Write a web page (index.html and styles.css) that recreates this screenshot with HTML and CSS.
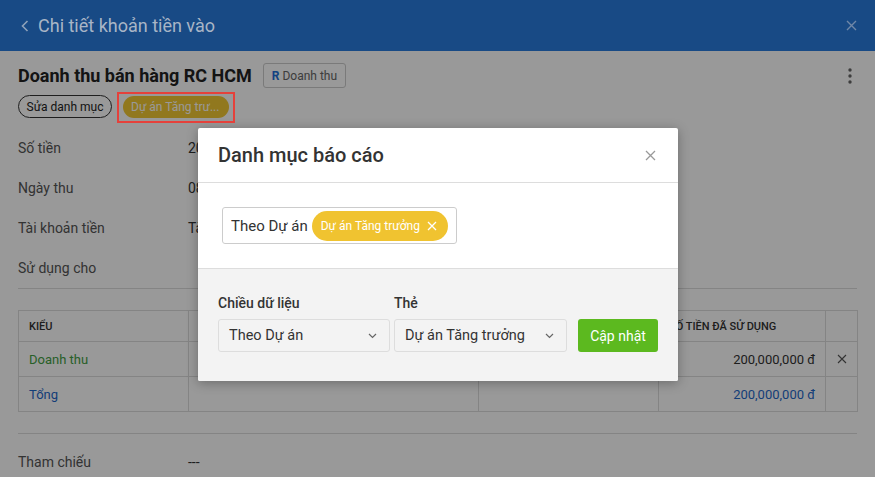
FILE: index.html
```html
<!DOCTYPE html>
<html lang="vi">
<head>
<meta charset="utf-8">
<title>Chi tiết khoản tiền vào</title>
<link rel="stylesheet" href="styles.css">
</head>
<body>
<div class="app">
  <header class="topbar">
    <svg class="topbar-back" width="8" height="12" viewBox="0 0 8 12"><path d="M6.5 1 L1.5 6 L6.5 11" fill="none" stroke="currentColor" stroke-width="1.6"/></svg>
    <span class="topbar-title">Chi tiết khoản tiền vào</span>
    <svg class="topbar-close" width="11" height="11" viewBox="0 0 11 11"><path d="M1 1 L10 10 M10 1 L1 10" stroke="currentColor" stroke-width="1.4"/></svg>
  </header>

  <main class="content">
    <div class="title-row">
      <h1 class="title">Doanh thu bán hàng RC HCM</h1>
      <span class="type-badge"><b>R</b> Doanh thu</span>
      <svg class="more" width="4" height="16" viewBox="0 0 4 16"><circle cx="2" cy="2" r="1.7"/><circle cx="2" cy="8" r="1.7"/><circle cx="2" cy="14" r="1.7"/></svg>
    </div>
    <div class="tag-row">
      <span class="pill-outline">Sửa danh mục</span>
      <span class="highlight"><span class="pill-yellow">Dự án Tăng trư...</span></span>
    </div>

    <div class="field"><span class="field-label">Số tiền</span><span class="field-value">200,000,000 đ</span></div>
    <div class="field"><span class="field-label">Ngày thu</span><span class="field-value">08/10/2019</span></div>
    <div class="field"><span class="field-label">Tài khoản tiền</span><span class="field-value">Tài khoản ngân hàng</span></div>
    <div class="field"><span class="field-label">Sử dụng cho</span><span class="field-value"></span></div>
    <div class="divider"></div>

    <table class="usage">
      <colgroup><col class="c1"><col class="c2"><col class="c3"><col class="c4"><col class="c5"></colgroup>
      <thead>
        <tr><th>Kiểu</th><th>Diễn giải</th><th>Số tiền</th><th>Số tiền đã sử dụng</th><th></th></tr>
      </thead>
      <tbody>
        <tr><td class="green">Doanh thu</td><td></td><td></td><td class="num">200,000,000 đ</td><td class="act"><svg width="10" height="10" viewBox="0 0 10 10"><path d="M1 1 L9 9 M9 1 L1 9" stroke="currentColor" stroke-width="1.1"/></svg></td></tr>
        <tr><td class="blue">Tổng</td><td></td><td></td><td class="num blue">200,000,000 đ</td><td></td></tr>
      </tbody>
    </table>
    <div class="divider second"></div>

    <div class="field"><span class="field-label">Tham chiếu</span><span class="field-value">---</span></div>
  </main>

  <div class="overlay"></div>

  <section class="modal">
    <div class="modal-head">
      <h2 class="modal-title">Danh mục báo cáo</h2>
      <svg class="modal-close" width="11" height="11" viewBox="0 0 11 11"><path d="M1 1 L10 10 M10 1 L1 10" stroke="currentColor" stroke-width="1.3"/></svg>
    </div>
    <div class="modal-body">
      <div class="tag-input">
        <span class="tag-input-text">Theo Dự án</span>
        <span class="chip">Dự án Tăng trưởng
          <svg width="10" height="10" viewBox="0 0 10 10"><path d="M1 1 L9 9 M9 1 L1 9" stroke="currentColor" stroke-width="1.3"/></svg>
        </span>
      </div>
    </div>
    <div class="modal-foot">
      <div class="form-group g1">
        <label class="form-label">Chiều dữ liệu</label>
        <div class="select"><span>Theo Dự án</span><svg width="9" height="6" viewBox="0 0 9 6"><path d="M1 1 L4.5 4.5 L8 1" fill="none" stroke="currentColor" stroke-width="1.2"/></svg></div>
      </div>
      <div class="form-group g2">
        <label class="form-label">Thẻ</label>
        <div class="select"><span>Dự án Tăng trưởng</span><svg width="9" height="6" viewBox="0 0 9 6"><path d="M1 1 L4.5 4.5 L8 1" fill="none" stroke="currentColor" stroke-width="1.2"/></svg></div>
      </div>
      <button class="btn-update">Cập nhật</button>
    </div>
  </section>
</div>
</body>
</html>
```

FILE: styles.css
```css
* { box-sizing: border-box; }
html, body { margin: 0; padding: 0; }
body {
  font-family: Roboto, "Noto Sans", "Liberation Sans", sans-serif;
  color: #333;
  background: #fff;
  width: 875px;
  height: 477px;
  overflow: hidden;
}
.app { position: relative; width: 875px; height: 477px; }

.topbar {
  height: 51px;
  background: #184a85;
  display: flex;
  align-items: center;
  padding: 0 18px 0 21px;
  color: #a8b5c6;
}
.topbar-back { margin-right: 9px; color: #8fa2ba; }
.topbar-title { font-size: 18px; flex: 1; }
.topbar-close { color: #7088a8; }

.content { padding: 12px 18px 0 18px; }

.title-row { display: flex; align-items: center; height: 25px; }
.title { margin: 0; font-size: 18px; font-weight: 700; color: #222; }
.type-badge {
  margin-left: 11px;
  height: 25px;
  padding: 0 8px 0 8px;
  border: 1px solid #ccc;
  border-radius: 3px;
  font-size: 12px;
  color: #666;
  display: inline-flex;
  align-items: center;
}
.type-badge b { color: #1e6fd9; margin-right: 3px; font-size: 12px; }
.more { margin-left: auto; margin-right: 5px; fill: #666; }

.tag-row { display: flex; align-items: center; margin-top: 7px; height: 23px; gap: 11px; }
.pill-outline {
  width: 94px;
  height: 23px;
  border: 1px solid #333;
  border-radius: 12px;
  font-size: 12px;
  display: inline-flex;
  align-items: center;
  justify-content: center;
  white-space: nowrap;
  color: #222;
}
.highlight { position: relative; display: inline-flex; }
.highlight::after {
  content: "";
  position: absolute;
  left: -6px; right: -6px; top: -4px; bottom: -5px;
  border: 2px solid #e5413b;
  z-index: 30;
}
.pill-yellow {
  height: 22px;
  width: 106px;
  border-radius: 11px;
  background: #f2c832;
  color: #fff;
  font-size: 12px;
  display: inline-flex;
  align-items: center;
  padding-left: 8px;
  white-space: nowrap;
}

.field { display: flex; align-items: center; height: 40px; font-size: 14px; }
.tag-row + .field { margin-top: 10px; }
.field-label { width: 170px; color: #555; }
.field-value { color: #333; }

.divider { height: 1px; background: #ddd; }
.divider.second { margin-top: 21px; margin-bottom: 8px; }

.usage {
  margin-top: 21px;
  width: 839px;
  border-collapse: collapse;
  table-layout: fixed;
  font-size: 13px;
}
.usage col.c1 { width: 170px; }
.usage col.c2 { width: 290px; }
.usage col.c3 { width: 180px; }
.usage col.c4 { width: 167px; }
.usage col.c5 { width: 32px; }
.usage th, .usage td { border: 1px solid #ddd; padding: 0 10px; }
.usage th {
  height: 31px;
  text-align: left;
  font-size: 11px;
  font-weight: 500;
  text-transform: uppercase;
  color: #333;
}
.usage td { height: 35px; }
.usage td.num { text-align: right; }
.usage td.act { text-align: center; padding: 0; color: #555; }
.usage td.act svg { display: block; margin: 0 auto; }
.green { color: #44a044; }
.blue { color: #1f68c9; }

.overlay {
  position: absolute;
  left: 0; right: 0; top: 51px; bottom: 0;
  background: rgba(0, 0, 0, 0.4);
  z-index: 10;
}

.modal {
  position: absolute;
  left: 198px;
  top: 128px;
  width: 480px;
  background: #fff;
  border-radius: 2px;
  box-shadow: 0 2px 12px rgba(0, 0, 0, 0.3);
  z-index: 20;
  overflow: hidden;
}
.modal-head {
  height: 55px;
  display: flex;
  align-items: center;
  padding: 0 22px 0 20px;
  border-bottom: 1px solid #ddd;
}
.modal-title { margin: 0; flex: 1; font-size: 20px; font-weight: 500; color: #333; }
.modal-close { color: #999; }

.modal-body { padding: 24px 24px 24px 24px; }
.tag-input {
  width: 235px;
  height: 37px;
  border: 1px solid #ccc;
  border-radius: 3px;
  display: flex;
  align-items: center;
  padding: 0 0 0 8px;
  gap: 4px;
}
.tag-input-text { font-size: 15px; color: #333; }
.chip {
  height: 30px;
  border-radius: 15px;
  background: #f0c330;
  color: #fff;
  font-size: 12px;
  display: inline-flex;
  align-items: center;
  padding: 0 11px 0 9px;
  gap: 7px;
  white-space: nowrap;
}

.modal-foot {
  background: #f3f3f3;
  border-top: 1px solid #ddd;
  padding: 26px 20px 29px 20px;
  display: flex;
  align-items: flex-end;
}
.form-group { display: flex; flex-direction: column; }
.form-group.g1 { width: 172px; margin-right: 4px; }
.form-group.g2 { width: 173px; margin-right: 11px; }
.form-label { font-size: 14px; font-weight: 500; color: #333; height: 17px; margin-bottom: 7px; }
.select {
  height: 33px;
  border: 1px solid #ddd;
  border-radius: 3px;
  display: flex;
  align-items: center;
  justify-content: space-between;
  padding: 0 12px 0 10px;
  font-size: 14.5px;
  color: #333;
}
.select svg { color: #666; }
.btn-update {
  width: 80px;
  height: 33px;
  border: 0;
  border-radius: 3px;
  background: #5cb91f;
  color: #fff;
  font-family: inherit;
  font-size: 14px;
  padding: 0;
}
```
